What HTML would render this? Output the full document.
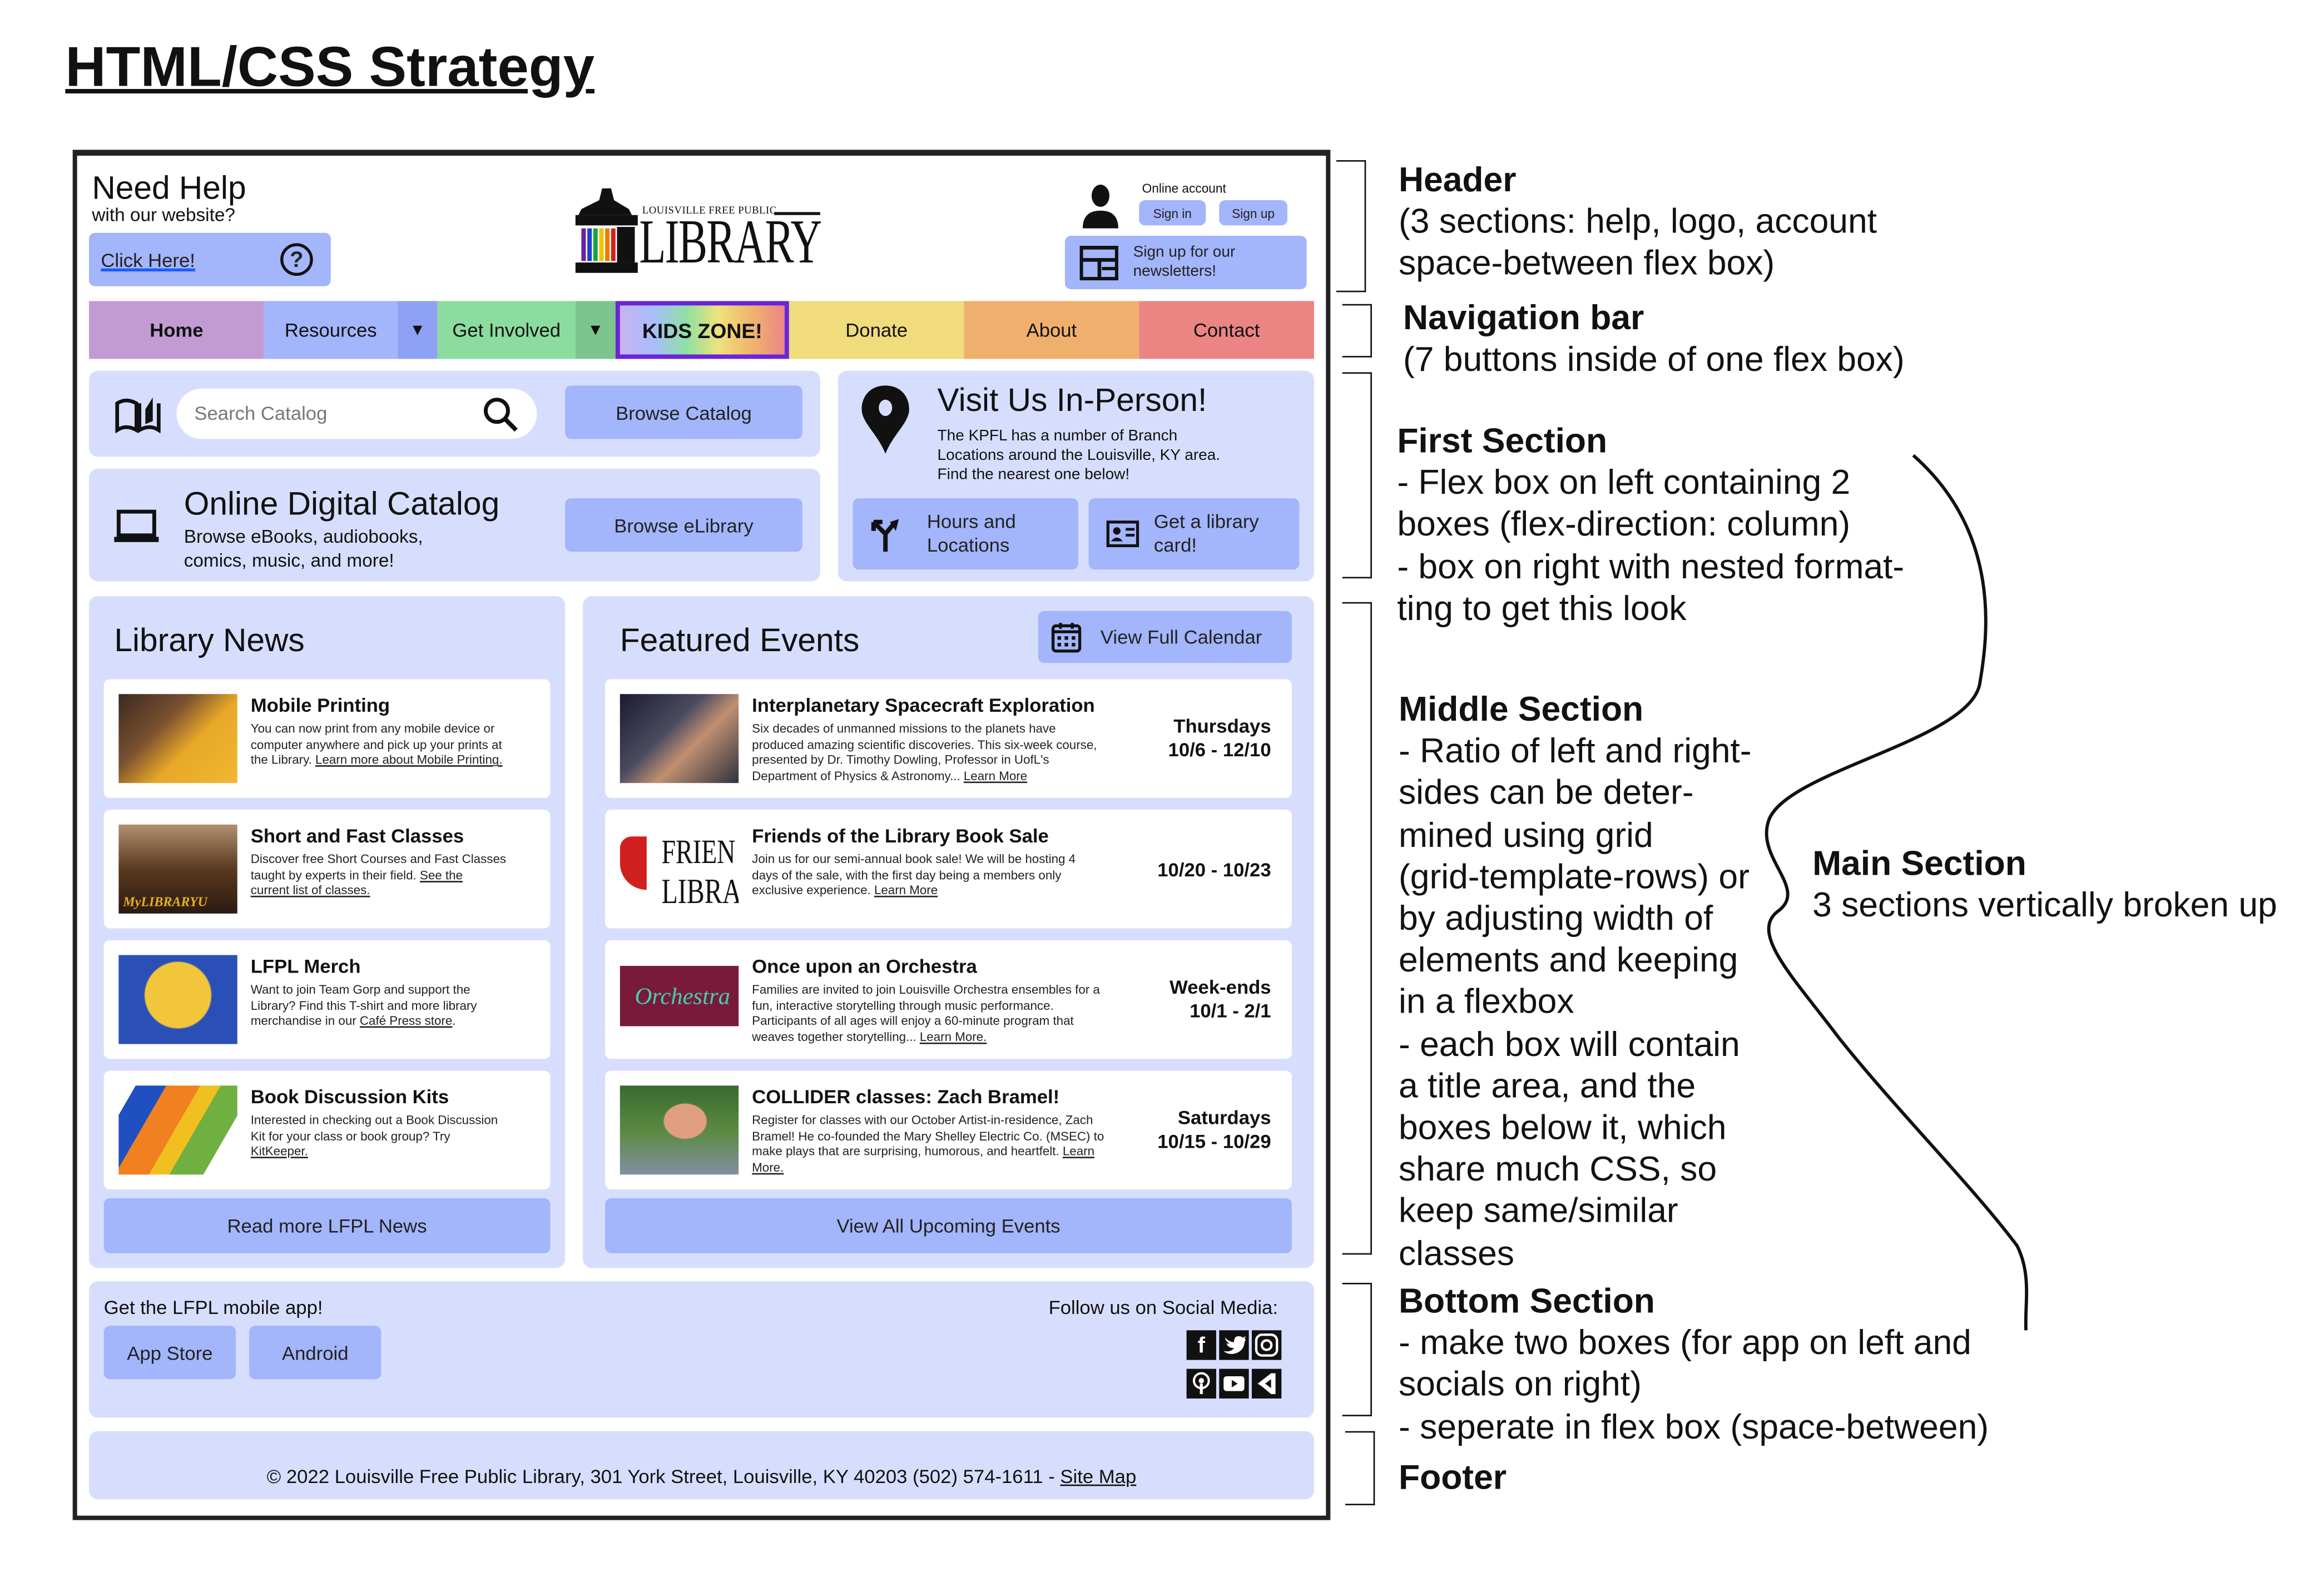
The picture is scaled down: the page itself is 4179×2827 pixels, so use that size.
<!DOCTYPE html>
<html><head><meta charset="utf-8">
<style>
*{margin:0;padding:0;box-sizing:border-box}
html,body{width:4179px;height:2820px;overflow:hidden;background:#fff}
#w{position:absolute;left:0;top:0;width:1570px;height:1060px;transform:scale(2.667);transform-origin:0 0;font-family:"Liberation Sans",sans-serif;color:#111}
.a{position:absolute}
.btn{position:absolute;background:#a3b5fb;border-radius:4px;display:flex;align-items:center;justify-content:center;font-size:13px;color:#222}
.pn{position:absolute;background:#d7defd;border-radius:6px}
.card{position:absolute;background:#fff;border-radius:4px}
.card .im{position:absolute;left:10px;top:10px;width:80px;height:60px}
.card .t{position:absolute;left:99px;top:10px;font-weight:bold;font-size:13px}
.card .d{position:absolute;left:99px;top:28px;font-size:8.4px;line-height:10.6px;color:#222}
.ev .d{width:238px}
.ev .dt{position:absolute;right:14px;top:24px;text-align:right;font-weight:bold;font-size:13px;line-height:16px}
u{text-decoration:underline}
.nav div{position:absolute;top:0;height:39px;display:flex;align-items:center;justify-content:center;font-size:13px}
.an{position:absolute;font-size:23.4px;line-height:28.2px;color:#111;white-space:nowrap}
.br{position:absolute;border:1.6px solid #111;border-left:none;width:20px}
</style></head><body><div id="w">

<div class="a" style="left:44px;top:25px;font-size:38px;font-weight:bold;text-decoration:underline;text-decoration-thickness:3px">HTML/CSS Strategy</div>

<!-- frame -->
<div class="a" style="left:49px;top:101px;width:848px;height:924px;border:3px solid #222;border-top-width:4px"></div>

<!-- header -->
<div class="a" style="left:62px;top:114px;font-size:22px">Need Help</div>
<div class="a" style="left:62px;top:138px;font-size:12.5px">with our website?</div>
<div class="btn" style="left:60px;top:157px;width:163px;height:36px;justify-content:space-between;padding:0 12px 0 8px"><u style="text-decoration-color:#1a5cff;text-decoration-thickness:2px">Click Here!</u><span style="width:22px;height:22px;border:2px solid #111;border-radius:50%;display:flex;align-items:center;justify-content:center;font-size:15px;font-weight:bold">?</span></div>

<!-- logo -->
<svg class="a" style="left:386px;top:125px" width="48" height="60" viewBox="0 0 48 60"><path d="M20 2 L26 2 L28 10 L38 16 L40 20 L4 20 L6 16 L18 10Z" fill="#111"/><rect x="2" y="20" width="42" height="7" fill="#111"/><rect x="6" y="29" width="3" height="22" fill="#6a1fa8"/><rect x="10" y="29" width="3" height="22" fill="#1f3fd0"/><rect x="14" y="29" width="3" height="22" fill="#17a24a"/><rect x="18" y="29" width="3" height="22" fill="#f2c200"/><rect x="22" y="29" width="3" height="22" fill="#f07a00"/><rect x="26" y="29" width="3" height="22" fill="#d31f1f"/><rect x="30" y="28" width="12" height="24" fill="#111"/><rect x="2" y="52" width="42" height="7" fill="#111"/></svg>
<div class="a" style="left:433px;top:138px;font-family:'Liberation Serif',serif;font-size:7px;letter-spacing:.2px">LOUISVILLE FREE PUBLIC</div>
<div class="a" style="left:522px;top:143px;width:31px;height:2px;background:#111"></div>
<div class="a" style="left:431px;top:140px;font-family:'Liberation Serif',serif;font-size:42px;transform:scaleX(.7);transform-origin:0 0;letter-spacing:-1px">LIBRARY</div>

<!-- account -->
<svg class="a" style="left:728px;top:124px" width="28" height="30" viewBox="0 0 28 30"><ellipse cx="14" cy="8" rx="6" ry="7.5" fill="#111"/><path d="M2 30 Q2 18 14 18 Q26 18 26 30Z" fill="#111"/></svg>
<div class="a" style="left:770px;top:122px;font-size:8.5px">Online account</div>
<div class="btn" style="left:768px;top:135px;width:45px;height:17px;font-size:8.5px">Sign in</div>
<div class="btn" style="left:822px;top:135px;width:46px;height:17px;font-size:8.5px">Sign up</div>
<div class="btn" style="left:718px;top:159px;width:163px;height:36px;justify-content:flex-start;padding-left:10px;font-size:10.5px;line-height:13px"><svg width="26" height="24" viewBox="0 0 26 24" style="margin-right:10px"><rect x="1" y="2" width="24" height="21" fill="none" stroke="#111" stroke-width="2.5"/><rect x="1" y="9" width="24" height="2.5" fill="#111"/><rect x="12" y="11" width="2.5" height="12" fill="#111"/><rect x="15" y="15" width="10" height="2.2" fill="#111"/></svg><span>Sign up for our<br>newsletters!</span></div>

<!-- nav -->
<div class="a nav" style="left:60px;top:203px;width:826px;height:39px">
<div style="left:0;width:118px;background:#c39bd3;font-weight:bold">Home</div>
<div style="left:118px;width:90px;background:#a3b5fb">Resources</div>
<div style="left:208px;width:27px;background:#8ea1f4;font-size:11px">▼</div>
<div style="left:235px;width:93px;background:#8bdc9e">Get Involved</div>
<div style="left:328px;width:27px;background:#7cc58e;font-size:11px">▼</div>
<div style="left:355px;width:117px;background:linear-gradient(90deg,#c7b4ee,#a9bdfd,#8ee0a4,#f0e27a,#f1b46d,#eb8585);border:3px solid #6a25d8;font-weight:bold;font-size:14px">KIDS ZONE!</div>
<div style="left:472px;width:118px;background:#f0db7d">Donate</div>
<div style="left:590px;width:118px;background:#f0b06d">About</div>
<div style="left:708px;width:118px;background:#ea8583">Contact</div>
</div>

<!-- first section -->
<div class="pn" style="left:60px;top:250px;width:493px;height:58px"></div>
<svg class="a" style="left:77px;top:266px" width="32" height="26" viewBox="0 0 32 26"><path d="M2 6 L2 24 Q8 20 15 24 L15 6 Q8 2 2 6Z M17 6 L17 24 Q24 20 30 24 L30 6" fill="none" stroke="#111" stroke-width="2.5"/><path d="M21 10 L26 2 L26 18 L21 20Z" fill="#111"/></svg>
<div class="a" style="left:119px;top:262px;width:243px;height:34px;background:#fff;border-radius:17px;font-size:13px;color:#777;padding:9px 0 0 12px">Search Catalog</div>
<svg class="a" style="left:325px;top:267px" width="26" height="26" viewBox="0 0 26 26"><circle cx="10" cy="10" r="7.5" fill="none" stroke="#111" stroke-width="2.6"/><path d="M15.5 15.5 L23 23" stroke="#111" stroke-width="3"/></svg>
<div class="btn" style="left:381px;top:260px;width:160px;height:36px">Browse Catalog</div>

<div class="pn" style="left:60px;top:316px;width:493px;height:76px"></div>
<svg class="a" style="left:76px;top:343px" width="32" height="24" viewBox="0 0 32 24"><rect x="4" y="2" width="24" height="16" fill="none" stroke="#111" stroke-width="2.6"/><rect x="1" y="19" width="30" height="3.5" fill="#111"/></svg>
<div class="a" style="left:124px;top:327px;font-size:22px">Online Digital Catalog</div>
<div class="a" style="left:124px;top:354px;font-size:12.5px;line-height:16px">Browse eBooks, audiobooks,<br>comics, music, and more!</div>
<div class="btn" style="left:381px;top:336px;width:160px;height:36px">Browse eLibrary</div>

<div class="pn" style="left:565px;top:250px;width:321px;height:142px"></div>
<svg class="a" style="left:580px;top:259px" width="34" height="48" viewBox="0 0 34 48"><path d="M17 1 C7 1 1 8 1 17 C1 26 12 34 17 47 C22 34 33 26 33 17 C33 8 27 1 17 1Z" fill="#111"/><ellipse cx="17" cy="16" rx="4.5" ry="5.5" fill="#d7defd"/></svg>
<div class="a" style="left:632px;top:257px;font-size:22px">Visit Us In-Person!</div>
<div class="a" style="left:632px;top:288px;font-size:10.5px;line-height:13.2px">The KPFL has a number of Branch<br>Locations around the Louisville, KY area.<br>Find the nearest one below!</div>
<div class="btn" style="left:575px;top:336px;width:152px;height:48px;justify-content:flex-start;padding-left:10px;line-height:16px"><svg width="24" height="24" viewBox="0 0 24 24" style="margin-right:16px"><path d="M12 24 L12 12 L4 4 M4 4 L4 10 M4 4 L10 4 M12 12 L17 6" fill="none" stroke="#111" stroke-width="3"/><path d="M15 4 L21 2 L19 10Z" fill="#111"/></svg><span>Hours and<br>Locations</span></div>
<div class="btn" style="left:734px;top:336px;width:142px;height:48px;justify-content:flex-start;padding-left:12px;line-height:16px"><svg width="22" height="18" viewBox="0 0 22 18" style="margin-right:10px"><rect x="1" y="1" width="20" height="16" fill="none" stroke="#111" stroke-width="2"/><circle cx="7" cy="7" r="2.5" fill="#111"/><path d="M3 14 Q7 9 11 14Z" fill="#111"/><rect x="13" y="5" width="6" height="1.8" fill="#111"/><rect x="13" y="9" width="6" height="1.8" fill="#111"/></svg><span>Get a library<br>card!</span></div>

<!-- library news -->
<div class="pn" style="left:60px;top:402px;width:321px;height:453px"></div>
<div class="a" style="left:77px;top:419px;font-size:22px">Library News</div>
<div class="card" style="left:70px;top:458px;width:301px;height:80px"><div class="im" style="background:linear-gradient(135deg,#3a2a20 0%,#7a5030 35%,#e8a828 60%,#f0b830 100%)"></div><div class="t">Mobile Printing</div><div class="d">You can now print from any mobile device or<br>computer anywhere and pick up your prints at<br>the Library. <u>Learn more about Mobile Printing.</u></div></div>
<div class="card" style="left:70px;top:546px;width:301px;height:80px"><div class="im" style="background:linear-gradient(180deg,#b09070,#5a3a20 50%,#2a1a10)"><span style="position:absolute;left:3px;bottom:3px;font:bold italic 9px 'Liberation Serif',serif;color:#e8b020">MyLIBRARYU</span></div><div class="t">Short and Fast Classes</div><div class="d">Discover free Short Courses and Fast Classes<br>taught by experts in their field. <u>See the</u><br><u>current list of classes.</u></div></div>
<div class="card" style="left:70px;top:634px;width:301px;height:80px"><div class="im" style="background:radial-gradient(circle at 50% 45%,#f2c63a 0 22px,#2a50b8 23px)"></div><div class="t">LFPL Merch</div><div class="d">Want to join Team Gorp and support the<br>Library? Find this T-shirt and more library<br>merchandise in our <u>Café Press store</u>.</div></div>
<div class="card" style="left:70px;top:722px;width:301px;height:80px"><div class="im" style="background:linear-gradient(120deg,#fff 0 10%,#2050c0 10% 28%,#f08020 28% 48%,#f0c020 48% 60%,#70b040 60% 80%,#fff 80%)"></div><div class="t">Book Discussion Kits</div><div class="d">Interested in checking out a Book Discussion<br>Kit for your class or book group? Try<br><u>KitKeeper.</u></div></div>
<div class="btn" style="left:70px;top:808px;width:301px;height:37px">Read more LFPL News</div>

<!-- events -->
<div class="pn" style="left:393px;top:402px;width:493px;height:453px"></div>
<div class="a" style="left:418px;top:419px;font-size:22px">Featured Events</div>
<div class="btn" style="left:700px;top:412px;width:171px;height:35px;justify-content:flex-start;padding-left:8px"><svg width="22" height="22" viewBox="0 0 22 22" style="margin-right:12px"><rect x="2" y="3" width="18" height="17" rx="2" fill="none" stroke="#111" stroke-width="2"/><rect x="2" y="6" width="18" height="2" fill="#111"/><rect x="6" y="1" width="2" height="4" fill="#111"/><rect x="14" y="1" width="2" height="4" fill="#111"/><g fill="#111"><rect x="5" y="10" width="2.4" height="2.4"/><rect x="9.8" y="10" width="2.4" height="2.4"/><rect x="14.6" y="10" width="2.4" height="2.4"/><rect x="5" y="14.5" width="2.4" height="2.4"/><rect x="9.8" y="14.5" width="2.4" height="2.4"/><rect x="14.6" y="14.5" width="2.4" height="2.4"/></g></svg>View Full Calendar</div>
<div class="card ev" style="left:408px;top:458px;width:463px;height:80px"><div class="im" style="background:linear-gradient(135deg,#1a1a30,#4a4a60 40%,#c09070 60%,#303040)"></div><div class="t">Interplanetary Spacecraft Exploration</div><div class="d">Six decades of unmanned missions to the planets have produced amazing scientific discoveries. This six-week course, presented by Dr. Timothy Dowling, Professor in UofL's Department of Physics &amp; Astronomy... <u>Learn More</u></div><div class="dt">Thursdays<br>10/6 - 12/10</div></div>
<div class="card ev" style="left:408px;top:546px;width:463px;height:80px"><div class="im" style="background:#fff;overflow:hidden"><div style="position:absolute;left:0;top:8px;width:18px;height:36px;background:#d02020;border-radius:8px 0 0 18px"></div><div style="position:absolute;left:28px;top:6px;font:23px 'Liberation Serif',serif;transform:scaleX(.75);transform-origin:0 0">FRIEN</div><div style="position:absolute;left:28px;top:33px;font:24px 'Liberation Serif',serif;transform:scaleX(.75);transform-origin:0 0">LIBRA</div></div><div class="t">Friends of the Library Book Sale</div><div class="d">Join us for our semi-annual book sale! We will be hosting 4 days of the sale, with the first day being a members only exclusive experience. <u>Learn More</u></div><div class="dt" style="top:33px">10/20 - 10/23</div></div>
<div class="card ev" style="left:408px;top:634px;width:463px;height:80px"><div class="im" style="background:linear-gradient(180deg,#fff 0 12%,#7a1a3a 12% 80%,#fff 80%)"><span style="position:absolute;left:10px;top:20px;font:italic 16px 'Liberation Serif',serif;color:#40d0b0">Orchestra</span></div><div class="t">Once upon an Orchestra</div><div class="d">Families are invited to join Louisville Orchestra ensembles for a fun, interactive storytelling through music performance. Participants of all ages will enjoy a 60-minute program that weaves together storytelling... <u>Learn More.</u></div><div class="dt">Week-ends<br>10/1 - 2/1</div></div>
<div class="card ev" style="left:408px;top:722px;width:463px;height:80px"><div class="im" style="background:radial-gradient(ellipse at 55% 40%,#e0a080 0 14px,transparent 15px),linear-gradient(180deg,#3a6a30,#5a8a40 50%,#8090a0)"></div><div class="t">COLLIDER classes: Zach Bramel!</div><div class="d">Register for classes with our October Artist-in-residence, Zach Bramel! He co-founded the Mary Shelley Electric Co. (MSEC) to make plays that are surprising, humorous, and heartfelt. <u>Learn More.</u></div><div class="dt">Saturdays<br>10/15 - 10/29</div></div>
<div class="btn" style="left:408px;top:808px;width:463px;height:37px">View All Upcoming Events</div>

<!-- bottom -->
<div class="pn" style="left:60px;top:864px;width:826px;height:92px"></div>
<div class="a" style="left:70px;top:874px;font-size:13px">Get the LFPL mobile app!</div>
<div class="btn" style="left:70px;top:894px;width:89px;height:36px">App Store</div>
<div class="btn" style="left:168px;top:894px;width:89px;height:36px">Android</div>
<div class="a" style="left:707px;top:874px;font-size:13px">Follow us on Social Media:</div>
<div class="a" style="left:800px;top:897px;display:grid;grid-template-columns:repeat(3,20px);gap:6px 2px">
<div style="height:20px;background:#111;color:#fff;font:bold 15px 'Liberation Sans';text-align:center;line-height:22px">f</div>
<div style="height:20px;background:#111"><svg width="20" height="20" viewBox="0 0 20 20"><path d="M3 14 Q8 15 10 12 Q6 12 5 9 Q6 9 7 9 Q4 7 4 5 Q7 8 10 8 Q10 4 13 4 Q15 4 16 5 L18 4 L17 6 L18 6 Q17 8 17 9 Q16 15 9 16 Q5 16 3 14Z" fill="#fff"/></svg></div>
<div style="height:20px;background:#111"><svg width="20" height="20" viewBox="0 0 20 20"><rect x="3" y="3" width="14" height="14" rx="4" fill="none" stroke="#fff" stroke-width="1.6"/><circle cx="10" cy="10" r="3.2" fill="none" stroke="#fff" stroke-width="1.6"/></svg></div>
<div style="height:20px;background:#111"><svg width="20" height="20" viewBox="0 0 20 20"><circle cx="10" cy="8" r="5" fill="none" stroke="#fff" stroke-width="1.5"/><circle cx="10" cy="8" r="1.8" fill="#fff"/><rect x="9" y="10" width="2" height="7" fill="#fff"/></svg></div>
<div style="height:20px;background:#111"><svg width="20" height="20" viewBox="0 0 20 20"><rect x="3" y="5" width="14" height="10" rx="2" fill="#fff"/><path d="M8.5 7.5 L12.5 10 L8.5 12.5Z" fill="#111"/></svg></div>
<div style="height:20px;background:#111"><svg width="20" height="20" viewBox="0 0 20 20"><path d="M4 10 L13 3 L16 3 L16 17 L13 17 L7 12 Z" fill="#fff"/><path d="M9 10 L13 7 L13 13Z" fill="#111"/></svg></div>
</div>

<!-- footer -->
<div class="pn" style="left:60px;top:965px;width:826px;height:46px"></div>
<div class="a" style="left:60px;top:988px;width:826px;text-align:center;font-size:13px">© 2022 Louisville Free Public Library, 301 York Street, Louisville, KY 40203 (502) 574-1611 - <u>Site Map</u></div>

<!-- brackets -->
<div class="br" style="left:901px;top:108px;height:89px"></div>
<div class="br" style="left:905px;top:205px;height:36px"></div>
<div class="br" style="left:905px;top:251px;height:139px"></div>
<div class="br" style="left:905px;top:406px;height:440px"></div>
<div class="br" style="left:905px;top:865px;height:90px"></div>
<div class="br" style="left:907px;top:965px;height:50px"></div>
<svg class="a" style="left:1180px;top:300px" width="200" height="600" viewBox="0 0 200 600"><path d="M110 7 C170 60 160 130 155 160 C150 200 20 220 12 255 C5 280 40 300 18 315 C0 330 30 360 60 400 C100 450 150 500 180 540 C190 560 185 580 186 597" fill="none" stroke="#111" stroke-width="2.2"/></svg>

<!-- annotations -->
<div class="an" style="left:943px;top:107px"><b>Header</b><br>(3 sections: help, logo, account<br>space-between flex box)</div>
<div class="an" style="left:946px;top:200px"><b>Navigation bar</b><br>(7 buttons inside of one flex box)</div>
<div class="an" style="left:942px;top:283px"><b>First Section</b><br>- Flex box on left containing 2<br>boxes (flex-direction: column)<br>- box on right with nested format-<br>ting to get this look</div>
<div class="an" style="left:943px;top:464px"><b>Middle Section</b><br>- Ratio of left and right-<br>sides can be deter-<br>mined using grid<br>(grid-template-rows) or<br>by adjusting width of<br>elements and keeping<br>in a flexbox<br>- each box will contain<br>a title area, and the<br>boxes below it, which<br>share much CSS, so<br>keep same/similar<br>classes</div>
<div class="an" style="left:1222px;top:568px"><b>Main Section</b><br>3 sections vertically broken up</div>
<div class="an" style="left:943px;top:863px"><b>Bottom Section</b><br>- make two boxes (for app on left and<br>socials on right)<br>- seperate in flex box (space-between)</div>
<div class="an" style="left:943px;top:982px"><b>Footer</b></div>

</div></body></html>
